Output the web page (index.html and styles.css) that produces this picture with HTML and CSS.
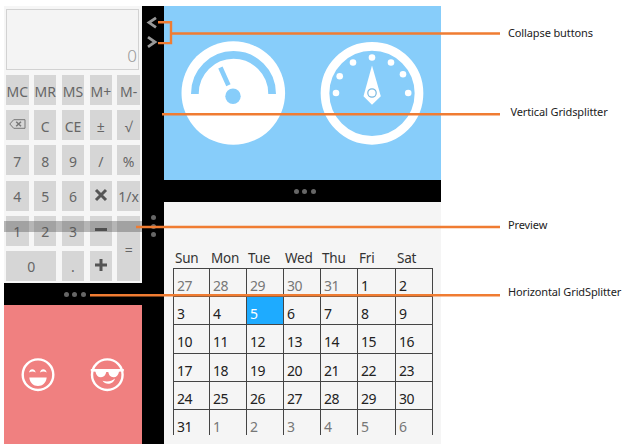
FILE: index.html
```html
<!DOCTYPE html>
<html lang="en">
<head>
<meta charset="utf-8">
<title>GridSplitter</title>
<link rel="stylesheet" href="styles.css">
</head>
<body>
<main class="figure">
  <div class="app">
    <div class="left">
      <section class="calculator">
        <div class="display">0</div>
        <div class="keys">
          <span>MC</span><span>MR</span><span>MS</span><span>M+</span><span>M-</span>
          <span><svg class="back" viewBox="0 0 17 10"><path d="M4.7.7H16v8.600H4.700L.8 5z"/><path class="bold" d="M7.200 2.700l4.800 4.600M12 2.700L7.200 7.300"/></svg></span><span>C</span><span>CE</span><span>±</span><span>√</span>
          <span>7</span><span>8</span><span>9</span><span>/</span><span>%</span>
          <span>4</span><span>5</span><span>6</span><span><svg class="op" viewBox="0 0 12 12"><path d="M1 1l10 10M11 1L1 11"/></svg></span><span>1/x</span>
          <span>1</span><span>2</span><span>3</span><span><svg class="op" viewBox="0 0 12 12"><path d="M0 5.500h12"/></svg></span><span class="equals">=</span>
          <span class="zero">0</span><span>.</span><span><svg class="op" viewBox="0 0 12 12"><path d="M0 6h12M6 0v12"/></svg></span>
        </div>
        <div class="preview"></div>
      </section>
      <div class="splitter"><i></i><i></i><i></i></div>
      <section class="faces">
        <svg viewBox="4 305 138 138">
          <g fill="none" stroke="#fff" stroke-width="2.400">
            <circle cx="38" cy="374.700" r="15.300"/><circle cx="107.300" cy="374.700" r="15.300"/>
          </g>
          <g fill="#fff">
            <path d="M29.300 377.500h17.400c-.7 5.500-4 8.500-8.700 8.500s-8-3-8.700-8.500zM29 372.500c.5-4.500 6-4.500 6.700 0-2-1.400-4.700-1.400-6.700 0zM40 372.500c.5-4.500 6-4.500 6.700 0-2-1.400-4.700-1.400-6.700 0z"/>
            <path d="M90.800 369h33v2.200l-4.800.5c-.6 3.500-2.500 5.500-5.500 5.500-3.200 0-4.600-2.200-5.200-5.200h-2c-.6 3-2.300 5.200-5.300 5.200-3.200 0-4.900-2-5.500-5.500l-4.700-.5z"/>
            <path d="M102.500 380.800c5 1.500 9 .5 12.500-2.300-1.500 6-9.500 7-12.500 2.300z"/>
          </g>
        </svg>
      </section>
    </div>
    <div class="bar">
      <svg class="collapse" viewBox="0 0 10 32"><path d="M9 .8L2 5.600l7 4.800M1 20.200l7 4.800-7 4.800"/></svg>
      <div class="grip"><i></i><i></i><i></i></div>
    </div>
    <div class="right">
      <section class="gauges">
        <svg viewBox="164 6 277 174">
          <circle cx="233.300" cy="93" r="51.800" fill="#fff"/>
          <g fill="none" stroke="#87cdfa">
            <path d="M194.900 94v-.5a38.600 38.600 0 0 1 77.200 0v.5" stroke-width="7.700"/>
            <path d="M220.400 67.500l8 17.800" stroke-width="4.700"/>
          </g>
          <circle cx="233" cy="96.200" r="7.700" fill="#87cdfa"/>
          <circle cx="372" cy="93.300" r="47" fill="none" stroke="#fff" stroke-width="8.700"/>
          <g fill="#fff">
            <circle cx="336" cy="93" r="3.300"/><circle cx="339.700" cy="76.300" r="3.300"/><circle cx="353" cy="62.500" r="3.300"/><circle cx="372" cy="57.500" r="3.300"/><circle cx="391" cy="62.500" r="3.300"/><circle cx="403" cy="74.200" r="3.300"/><circle cx="408.200" cy="93" r="3.300"/>
            <path d="M372 65.500l8.800 30.800-8.800 8.500-8.500-8.500z"/>
          </g>
          <circle cx="372" cy="93" r="4.200" fill="none" stroke="#78b8e0" stroke-width="1.200"/>
        </svg>
      </section>
      <div class="splitter"><i></i><i></i><i></i></div>
      <section class="calendar">
        <div class="days"><b>Sun</b><b>Mon</b><b>Tue</b><b>Wed</b><b>Thu</b><b>Fri</b><b>Sat</b></div>
        <div class="dates">
          <span class="dim">27</span><span class="dim">28</span><span class="dim">29</span><span class="dim">30</span><span class="dim">31</span><span>1</span><span>2</span>
          <span>3</span><span>4</span><span class="today">5</span><span>6</span><span>7</span><span>8</span><span>9</span>
          <span>10</span><span>11</span><span>12</span><span>13</span><span>14</span><span>15</span><span>16</span>
          <span>17</span><span>18</span><span>19</span><span>20</span><span>21</span><span>22</span><span>23</span>
          <span>24</span><span>25</span><span>26</span><span>27</span><span>28</span><span>29</span><span>30</span>
          <span>31</span><span class="dim">1</span><span class="dim">2</span><span class="dim">3</span><span class="dim">4</span><span class="dim">5</span><span class="dim">6</span>
        </div>
      </section>
    </div>
  </div>
  <aside class="labels">
    <p class="l1">Collapse buttons</p>
    <p class="l2">Vertical Gridsplitter</p>
    <p class="l3">Preview</p>
    <p class="l4">Horizontal GridSplitter</p>
  </aside>
  <svg class="lines" viewBox="0 0 624 447">
    <path d="M158 22.300h13v20.800h-13M171 33.500h329M162 114.200h338M136 227h364M90 295.200h410"/>
  </svg>
</main>
</body>
</html>
```

FILE: styles.css
```css
* { box-sizing: border-box; }
body { margin: 0; background: #fff; font-family: "Noto Sans", "Open Sans", sans-serif; }
svg { display: block; }
.figure { position: relative; display: flex; width: 624px; height: 447px; padding: 6px 0 0 4px; overflow: hidden; }
.app { display: flex; flex: none; width: 437px; height: 437.500px; background: #000; }
.left { display: flex; flex-direction: column; width: 138px; }
.right { display: flex; flex-direction: column; width: 277px; }
.calculator { position: relative; height: 277px; padding: 3px 2px 2px; background: #f6f6f6; }
.display { display: flex; align-items: flex-end; justify-content: flex-end; width: 133px; height: 61px; padding: 0 1px 3px; border: 1px solid #d2d2d2; background: #f4f4f4; color: #999; font-size: 17px; font-weight: 300; line-height: 20px; }
.keys { display: grid; grid-template-columns: repeat(5, 1fr); grid-template-rows: repeat(6, 30px); gap: 5.200px; width: 134px; margin-top: 5px; color: #666; font-size: 14px; }
.keys > span { display: flex; align-items: center; justify-content: center; min-width: 0; padding-top: 2px; background: #d6d6d6; white-space: nowrap; }
.keys .zero { grid-column: span 2; }
.keys .equals { grid-column: 5; grid-row: 5 / span 2; }
.back { width: 17px; height: 10px; margin-top: -4px; fill: none; stroke: #777; stroke-width: 1; }
.back .bold { stroke-width: 1.500; }
.op { width: 12px; height: 12px; margin-top: -3px; overflow: visible; fill: none; stroke: #555; stroke-width: 3; }
.preview { position: absolute; left: 0; top: 215px; width: 138px; height: 11px; background: rgba(70, 70, 70, .36); }
.splitter { display: flex; align-items: center; justify-content: center; gap: 3.500px; height: 22px; padding-left: 3px; background: #000; }
i { width: 5px; height: 5px; border-radius: 50%; background: #666; }
.faces { flex: 1; background: #f08080; }
.faces svg { width: 138px; height: 138px; }
.bar { display: flex; flex-direction: column; align-items: center; width: 22px; background: #000; }
.collapse { width: 10px; height: 32px; margin: 11px 3px 0 0; overflow: visible; fill: none; stroke: #999; stroke-width: 2.800; }
.grip { display: flex; flex-direction: column; gap: 3.700px; margin-top: 166px; }
.gauges { height: 174px; background: #87cdfa; }
.gauges svg { width: 277px; height: 174px; }
.right .splitter { padding-left: 4px; }
.calendar { flex: 1; padding: 47px 8px 0 9px; background: #f5f5f5; }
.days, .dates { display: grid; grid-template-columns: 36px 37px 37px 37px 37px 38px 37px; }
.days { height: 19px; color: #333; font-size: 13.500px; letter-spacing: -.2px; line-height: 18px; }
.days b { padding-left: 2px; font-weight: 400; white-space: nowrap; }
.dates { width: 260px; height: 167px; grid-template-rows: repeat(6, 28.200px); overflow: hidden; border-right: 1px solid #444; color: #222; font-size: 14px; letter-spacing: -.5px; }
.dates span { padding: 6px 0 0 3px; border-top: 1px solid #444; border-left: 1px solid #444; line-height: 21px; }
.dates .dim { color: #777; }
.dates .today { background: #1eabff; color: #fff; }
.labels { width: 116px; margin-left: 67px; padding-top: 19px; color: #222; font-size: 11px; letter-spacing: -.12px; line-height: 16px; }
.labels p { margin: 0; white-space: nowrap; }
.labels .l2 { margin: 63px 0 0 2.500px; }
.labels .l3 { margin-top: 97px; }
.labels .l4 { margin-top: 51px; }
.lines { position: absolute; left: 0; top: 0; width: 624px; height: 447px; fill: none; stroke: #f07c32; stroke-width: 2.400; }
```
